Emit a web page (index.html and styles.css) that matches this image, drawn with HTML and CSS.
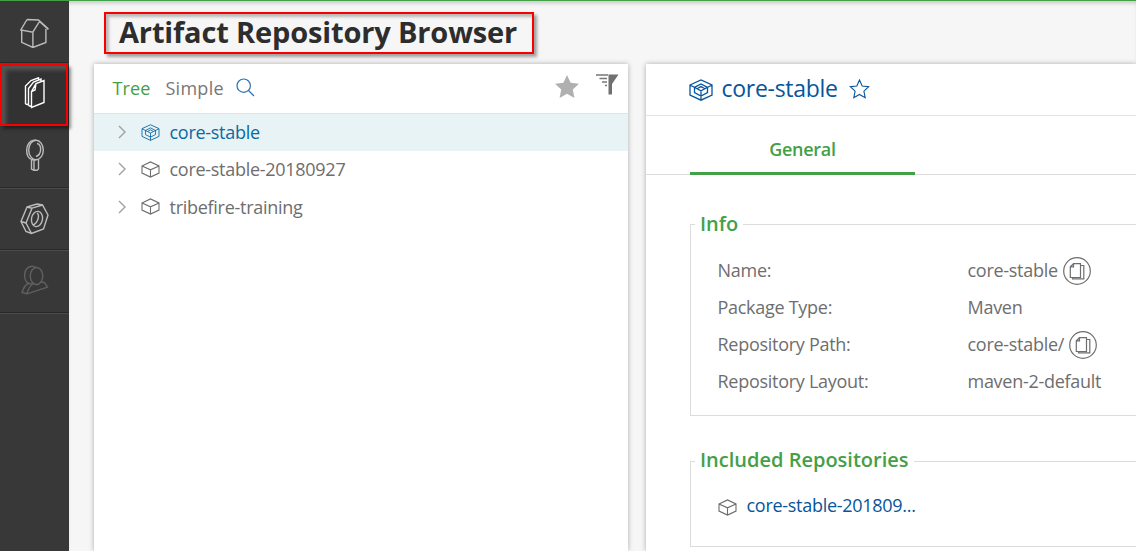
FILE: index.html
```html
<!DOCTYPE html>
<html lang="en">
<head>
<meta charset="utf-8">
<title>Artifact Repository Browser</title>
<link rel="stylesheet" href="styles.css">
</head>
<body>
<svg class="symbols" aria-hidden="true">
  <symbol id="box" viewBox="0 0 20 18"><path d="M1 5.200 10 1l9 4.200v7.600L10 17l-9-4.200zM1 5.200l9 4.100 9-4.100M10 9.300V17"/></symbol>
  <symbol id="virtual-box" viewBox="0 0 24 22"><path d="M1 6 12 1l11 5v10l-11 5.200L1 16zM1 6l11 5.800L23 6M12 17v4.200M5.500 8.400 12 5l6.500 3.400v5.300L12 17l-6.500-3.300zM12 11.800V17M8.500 9.500 12 7.600l3.500 1.900"/></symbol>
  <symbol id="copy" viewBox="0 0 28 28"><circle cx="14" cy="14" r="13.300"/><path d="M10.500 6.700h7v13.800H7.300V9.800zM10.500 6.700v3.100H7.300M17.500 8.500h3.300v13.300H9.500v-1.300"/></symbol>
  <symbol id="chevron" viewBox="0 0 8 14"><path d="m1 1 6 6-6 6"/></symbol>
</svg>
<div class="app">
  <nav class="sidebar">
    <a class="nav-item"><svg width="30" height="32" viewBox="0 0 30 32"><path d="M7 3.500 18.500 4 28.500 13M7 3.500.800 14l12 2.200L19.500 5.500l8.800 8M1.700 14.300v12l11.200 5.200 13-5V13M12.900 16.200v15.300"/></svg></a>
    <a class="nav-item active"><svg width="22" height="32" viewBox="0 0 22 32"><path d="M7.500 14.500 12 6.500l8-3v22L7.500 30.500zM7.500 14.500l3.500-1.500 1-6.500M4.500 28.500V11.500L9.500 5 17 2v2.500M4.500 28.500l3 1M1.500 27V9L7 3.500 14.500 .8v2M1.500 27l3 .8"/></svg></a>
    <a class="nav-item"><svg width="20" height="32" viewBox="0 0 20 32"><ellipse cx="11" cy="11" rx="7.300" ry="9.800"/><path d="M11 1.200H9C-.500 2-.500 20 7.500 20.800H11M12 4.500c5 1 5 11-1 13M6.500 21v9l2.500 1.300h3l1.500-1.300v-9M9 21v10"/></svg></a>
    <a class="nav-item"><svg width="30" height="32" viewBox="0 0 30 32"><path d="m7 4 10-3 5.500 1 5.500 10-4.500 14-12 4.500-5.500-2L1 18.500zM7 4l5 1.200L6 20l5.500 10.500M12 5.200 22.500 2M1 18.500l5 1.500"/><ellipse cx="17" cy="16" rx="5.500" ry="7.700" transform="rotate(10 17 16)"/><path d="M17 10c3 2 1 10-4 12"/></svg></a>
    <a class="nav-item dim"><svg width="28" height="30" viewBox="0 0 28 30"><ellipse cx="15.500" cy="11" rx="6.300" ry="8.500"/><path d="M15.500 2.500 11 1.200C2 2 1.500 16 8 18.500l4 .5M8.500 18.200C4 19 2.500 23 1 27.500l5 1.300 20.500-6.600c-2-3.500-3-5.500-6.500-5.200M12 19c-3.500 2-5 5-6 9.800"/></svg></a>
  </nav>
  <main class="main">
    <h1 class="page-title">Artifact Repository Browser</h1>
    <div class="panels">
      <section class="panel tree-panel">
        <header class="tree-header">
          <span class="mode selected">Tree</span>
          <span class="mode">Simple</span>
          <svg class="search" width="19" height="19" viewBox="0 0 19 19"><circle cx="7.700" cy="7.700" r="6.700"/><path d="m12.500 12.500 5.500 5.500"/></svg>
          <svg class="favorites" width="24" height="23" viewBox="0 0 24 23"><path d="m12 0 3.600 7.800 8.400 1-6.200 5.700L19.400 23 12 18.700 4.600 23l1.600-8.500L0 8.800l8.400-1z"/></svg>
          <svg class="filter" width="23" height="21" viewBox="0 0 23 21"><path class="filter-funnel" d="M12.500 .500h10L16 10v10.500h-3.500z"/><path d="M0 1h12M3.500 4.500H11M6 8h5M9 11.500h2"/></svg>
        </header>
        <div class="tree">
          <div class="row current"><svg class="chevron" width="8" height="14"><use href="#chevron"/></svg><svg class="icon" width="19" height="17"><use href="#virtual-box"/></svg><span>core-stable</span></div>
          <div class="row"><svg class="chevron" width="8" height="14"><use href="#chevron"/></svg><svg class="icon" width="19" height="17"><use href="#box"/></svg><span>core-stable-20180927</span></div>
          <div class="row"><svg class="chevron" width="8" height="14"><use href="#chevron"/></svg><svg class="icon" width="19" height="17"><use href="#box"/></svg><span>tribefire-training</span></div>
        </div>
      </section>
      <section class="panel detail-panel">
        <header class="detail-header">
          <svg class="icon" width="24" height="22"><use href="#virtual-box"/></svg>
          <h2 class="detail-title">core-stable</h2>
          <svg class="star" width="21" height="20" viewBox="0 0 21 20"><path d="m10.500 1 2.700 6 6.500.700-4.800 4.500 1.300 6.500-5.700-3.300-5.700 3.300 1.300-6.500-4.800-4.500 6.500-.7z"/></svg>
        </header>
        <div class="tabs"><div class="tab">General</div></div>
        <div class="detail-body">
          <fieldset class="group info">
            <legend>Info</legend>
            <dl class="fields">
              <dt>Name:</dt><dd>core-stable<svg class="copy" width="28" height="28"><use href="#copy"/></svg></dd>
              <dt>Package Type:</dt><dd>Maven</dd>
              <dt>Repository Path:</dt><dd>core-stable/<svg class="copy" width="28" height="28"><use href="#copy"/></svg></dd>
              <dt>Repository Layout:</dt><dd>maven-2-default</dd>
            </dl>
          </fieldset>
          <fieldset class="group included">
            <legend>Included Repositories</legend>
            <div class="repo"><svg class="icon" width="19" height="17"><use href="#box"/></svg><a>core-stable-201809...</a></div>
          </fieldset>
        </div>
      </section>
    </div>
  </main>
</div>
</body>
</html>
```

FILE: styles.css
```css
* { box-sizing: border-box; }
body {
  margin: 0;
  height: 551px;
  overflow: hidden;
  background: #f6f6f6;
  color: #6e6e6e;
  font: 18px/37px "Open Sans", sans-serif;
  letter-spacing: -.28px;
}
h1, h2, dl, dd { margin: 0; }
svg { fill: none; stroke: currentColor; flex: none; }
.symbols { position: absolute; width: 0; height: 0; }
.app {
  display: flex;
  height: 551px;
  border-top: 1px solid #43a047;
}
.sidebar {
  width: 69px;
  flex: none;
  background: #383838;
  color: #bcbcbc;
}
.nav-item {
  display: flex;
  align-items: center;
  justify-content: center;
  height: 62.5px;
  border-bottom: 1px solid #4b4b4b;
  box-shadow: inset 0 -1px #292929;
}
.nav-item svg { stroke-width: 1.4; }
.nav-item:nth-child(n+3) { padding-bottom: 3px; }
.nav-item:nth-child(4) { padding-bottom: 0; }
.nav-item.active {
  width: 68px;
  padding: 0 0 3px 2px;
  background: #323232;
  border: 2px solid #f80000;
  color: #fff;
  box-shadow: 3px 3px 3px rgba(0, 0, 0, .4), inset 4px 4px 4px rgba(120, 120, 120, .5);
}
.nav-item.dim { color: #606060; }
.main {
  flex: 1;
  min-width: 0;
  display: flex;
  flex-direction: column;
  box-shadow: inset 0 4px 4px -2px rgba(0, 0, 0, .2);
}
.page-title {
  width: 430px;
  height: 42px;
  margin: 11px 0 10px 35px;
  padding-left: 13px;
  border: 2px solid #f80000;
  box-shadow: 3px 3px 3px rgba(0, 0, 0, .35), inset 3px 3px 3px rgba(0, 0, 0, .25);
  color: #2d2d2d;
  font-size: 29px;
  font-weight: 700;
  letter-spacing: -.15px;
  line-height: 35px;
  white-space: nowrap;
}
.panels {
  flex: 1;
  display: flex;
  gap: 18px;
  padding-left: 25px;
}
.panel {
  background: #fff;
  box-shadow: 0 0 5px rgba(0, 0, 0, .3);
}
.tree-panel { width: 534px; flex: none; }
.tree-header {
  display: flex;
  align-items: center;
  height: 50px;
  padding: 0 9px 0 18.500px;
  border-bottom: 1px solid #dfe5e5;
  letter-spacing: .3px;
}
.mode { margin-right: 15px; color: #777; }
.mode.selected { color: #43a047; letter-spacing: .1px; }
.search { margin-left: -3px; margin-top: -2px; color: #2872b5; stroke-width: 1.2; }
.favorites { margin: -5px 17px 0 auto; fill: #b0b0b0; stroke: none; }
.filter { margin-top: -8px; color: #777; stroke-width: 1.3; }
.filter-funnel { fill: #707070; stroke: none; }
.row {
  display: flex;
  align-items: center;
  height: 37.500px;
  padding-left: 23.500px;
}
.row.current { height: 37px; background: #e8f3f5; color: #0b69a3; }
.chevron { margin: -1px 15px 0 0; color: #a0a0a0; stroke-width: 1.4; }
.row .icon { margin: -1px 10px 0 0; }
.row .icon, .repo .icon { stroke-width: 1.15; }
.detail-panel { flex: 1; min-width: 0; }
.detail-header {
  display: flex;
  align-items: center;
  height: 52px;
  padding: 0 0 2px 42.500px;
  border-bottom: 1px solid #e4e4e4;
  color: #07559b;
}
.detail-header .icon { margin-top: 3px; stroke-width: 1.3; }
.detail-title { margin: 0 11px 0 9px; font-size: 23px; font-weight: 400; }
.star { stroke-width: 1.1; }
.tabs {
  height: 59px;
  padding-left: 44px;
  border-bottom: 1px solid #ddd;
}
.tab {
  width: 225px;
  height: 59px;
  padding-top: 15px;
  border-bottom: 3px solid #43a047;
  border-radius: 2px 2px 0 0;
  color: #43a047;
  font-weight: 600;
  text-align: center;
}
.detail-body { padding: 36px 0 0 44px; }
.group {
  min-width: 0;
  margin: 0;
  padding: 0 0 0 27px;
  border: 1px solid #dcdcdc;
  border-right: 0;
}
.group legend {
  margin-left: -23px;
  padding: 0 5px;
  color: #43a047;
  font-size: 20px;
  font-weight: 600;
  letter-spacing: 0;
  line-height: 26px;
}
.info { height: 205px; }
.included { height: 100px; margin-top: 31px; }
.included legend { padding-bottom: 2px; }
.fields {
  display: grid;
  grid-template-columns: 250px 1fr;
  grid-auto-rows: 37px;
  margin-left: -.5px;
  padding-top: 15px;
}
.fields dd { display: flex; align-items: center; }
.copy { margin-left: 5px; stroke-width: 1.2; }
.repo { display: flex; align-items: center; padding-top: 12px; color: #07559b; }
.repo .icon { margin: 3px 9.500px 0 0; color: #6b6b6b; }
```
